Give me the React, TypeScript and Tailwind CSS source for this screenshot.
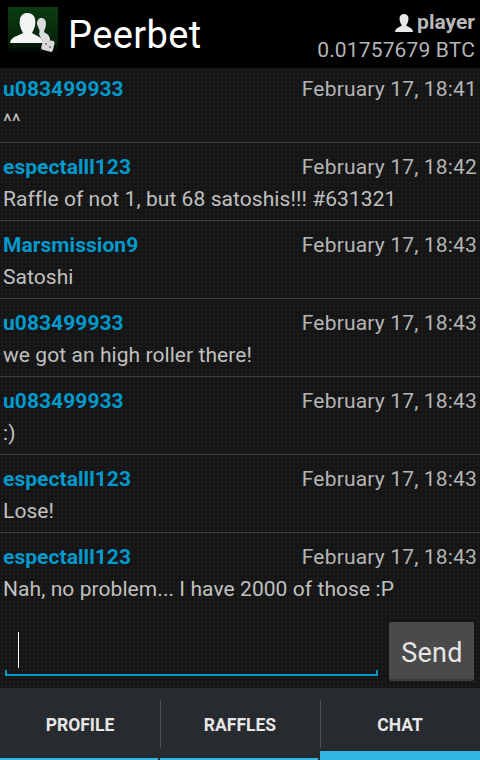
const messages = [
  { name: "u083499933", time: "February 17, 18:41", text: "^^" },
  { name: "espectalll123", time: "February 17, 18:42", text: "Raffle of not 1, but 68 satoshis!!! #631321" },
  { name: "Marsmission9", time: "February 17, 18:43", text: "Satoshi" },
  { name: "u083499933", time: "February 17, 18:43", text: "we got an high roller there!" },
  { name: "u083499933", time: "February 17, 18:43", text: ":)" },
  { name: "espectalll123", time: "February 17, 18:43", text: "Lose!" },
  { name: "espectalll123", time: "February 17, 18:43", text: "Nah, no problem... I have 2000 of those :P" },
];

function Logo() {
  return (
    <svg width="50" height="46" viewBox="0 0 50 46" className="block blur-[0.5px]">
      <defs>
        <linearGradient id="logoBg" x1="0" y1="0" x2="0" y2="1">
          <stop offset="0" stopColor="#0b3d12" />
          <stop offset="0.75" stopColor="#062308" />
          <stop offset="1" stopColor="#000000" />
        </linearGradient>
      </defs>
      <rect width="50" height="46" fill="url(#logoBg)" />
      <path d="M2 36 C3 29 11 29 15 26 C12 21 11 16 12 12 C13 7 17 6 19 6 C22 6 26 7 27 12 C28 16 27 21 24 26 C28 29 34 29 35 36 Z" fill="#f4f4f4" />
      <path d="M31 27 C33 24 30 21 29 17 C29 13 31 11 33 11 C36 11 38 13 38 17 C38 21 36 23 36 25 C39 27 42 28 42 33 L35 36 Z" fill="#dcdcdc" />
      <rect x="34" y="33" width="12" height="11" rx="2" fill="#d8d8d8" transform="rotate(14 40 38)" />
      <circle cx="38" cy="37" r="1" fill="#777" />
      <circle cx="42" cy="40" r="1" fill="#777" />
    </svg>
  );
}

function PlayerIcon() {
  return (
    <svg width="20" height="20" viewBox="0 0 20 20" className="block">
      <path d="M1 19 C1 15 6 14 8 12.5 C6.5 10.5 5.5 8 5.5 5.5 C5.5 2.5 7.5 1 10 1 C12.5 1 14.5 2.5 14.5 5.5 C14.5 8 13.5 10.5 12 12.5 C14 14 19 15 19 19 Z" fill="#e8e8e8" />
    </svg>
  );
}

function Row({ name, time, text }: { name: string; time: string; text: string }) {
  return (
    <div className="h-[78px] shrink-0 border-b border-[#3d3d3d] px-[3px] pt-[11px]">
      <div className="flex items-center justify-between h-[28px]">
        <span className="text-[21px] tracking-[0.05px] font-bold text-[#0099cc]">{name}</span>
        <span className="text-[21px] tracking-[0.17px] text-[#b4b4b4]">{time}</span>
      </div>
      <div className="mt-[4px] h-[28px] flex items-center text-[21px] tracking-[0.07px] text-[#c0c0c0]">{text}</div>
    </div>
  );
}

export default function App() {
  return (
    <div className="w-[480px] h-[760px] flex flex-col overflow-hidden bg-[#171717] font-['Roboto',sans-serif]">
      {/* Action bar */}
      <header className="h-[68px] shrink-0 bg-black flex items-start">
        <div className="ml-[8px] mt-[7px] flex items-start">
          <Logo />
          <span className="ml-[10px] mt-[6px] text-[38px] tracking-[0.4px] leading-[44px] text-white">Peerbet</span>
        </div>
        <div className="ml-auto pr-[5px] pt-[9px] flex flex-col items-end">
          <div className="flex items-center h-[28px] text-[21px] font-bold text-[#b9b9b9]">
            <PlayerIcon />
            <span className="ml-[3px]">player</span>
          </div>
          <div className="h-[28px] flex items-center text-[21px] tracking-[0.15px] text-[#b4b4b4]">0.01757679 BTC</div>
        </div>
      </header>

      {/* Messages */}
      <div className="flex-1 overflow-hidden bg-[radial-gradient(circle,#1d1d1d_1px,#151515_1px)] bg-size-[4px_4px] flex flex-col">
        <div className="h-[542px] overflow-hidden flex flex-col">
          <div className="-mt-[3px] flex flex-col">
            {messages.map((m, i) => (
              <Row key={i} {...m} />
            ))}
          </div>
        </div>

        {/* Input */}
        <div className="flex-1 flex items-start pl-[5px] pr-[6px]">
          <div className="relative w-[373px] h-[66px] mr-[11px]">
            <div className="absolute left-[13px] top-[22px] w-px h-[36px] bg-white" />
            <div className="absolute left-0 bottom-0 right-0 h-[6px] border-x-[2px] border-b-[2px] border-[#0099cc]" />
          </div>
          <button className="mt-[12px] w-[85px] h-[59px] pt-[5px] pl-[1px] bg-[#4a4a4a] border-b-[2px] border-[#3a3a3a] rounded-[2px] text-[27px] tracking-[0.2px] text-[#e6e6e6]">
            Send
          </button>
        </div>
      </div>

      {/* Tabs */}
      <nav className="h-[72px] shrink-0 bg-[#272b30] flex">
        {["PROFILE", "RAFFLES", "CHAT"].map((t, i) => (
          <div key={t} className="relative flex-1 flex items-center justify-center">
            <span className="mt-[2px] text-[17.5px] font-bold text-[#e6e6e6]">{t}</span>
            {i > 0 && <div className="absolute left-0 top-[12px] h-[48px] w-px bg-[#4b4f54]" />}
            <div className={i === 2 ? "absolute left-0 right-0 bottom-0 h-[9px] bg-[#33b5e5]" : "absolute left-0 right-[2px] bottom-0 h-[2px] bg-[#33b5e5]"} />
          </div>
        ))}
      </nav>
    </div>
  );
}
